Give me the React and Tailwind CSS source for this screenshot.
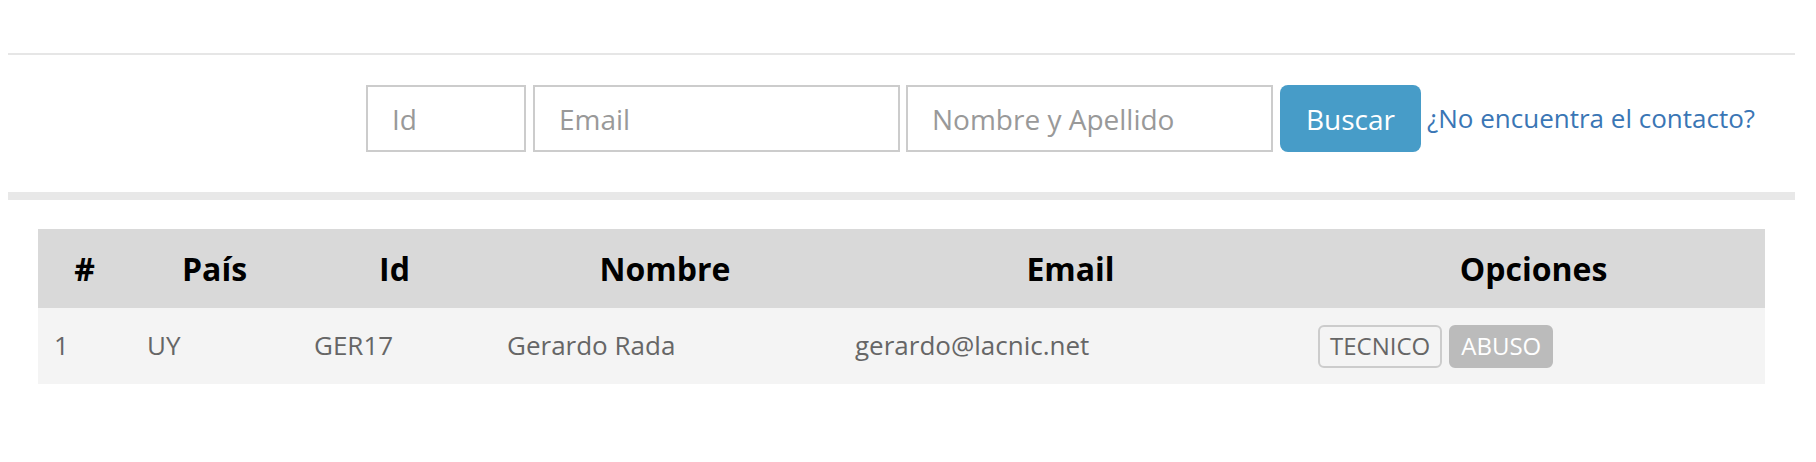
import React from "react";

export default function App() {
  const cols = [
    { h: "#", w: "w-[93px]" },
    { h: "País", w: "w-[167px]" },
    { h: "Id", w: "w-[193px]" },
    { h: "Nombre", w: "w-[348px]" },
    { h: "Email", w: "w-[463px]" },
    { h: "Opciones", w: "w-[463px]" },
  ];
  return (
    <div className="w-[1816px] h-[462px] bg-white font-['Open_Sans',sans-serif] overflow-hidden">
      <div className="pt-[53px] pl-[8px] pr-[21px]">
        <div className="h-[2px] bg-[#e6e6e6]" />
        <div className="mt-[30px] pl-[358px] flex items-center">
          <input
            placeholder="Id"
            className="w-[160px] h-[67px] border-2 border-[#cccccc] bg-white px-[24px] text-[28px] text-[#555] placeholder:text-[#999] outline-none"
          />
          <input
            placeholder="Email"
            className="ml-[7px] w-[367px] h-[67px] border-2 border-[#cccccc] bg-white px-[24px] text-[28px] text-[#555] placeholder:text-[#999] outline-none"
          />
          <input
            placeholder="Nombre y Apellido"
            className="ml-[6px] w-[367px] h-[67px] border-2 border-[#cccccc] bg-white px-[24px] text-[28px] text-[#555] placeholder:text-[#999] outline-none"
          />
          <button className="ml-[7px] w-[141px] h-[67px] rounded-[8px] bg-[#479cc8] text-white text-[28px]">
            Buscar
          </button>
          <a className="ml-[6px] text-[26px] text-[#3a76b5] cursor-pointer">
            ¿No encuentra el contacto?
          </a>
        </div>
        <div className="mt-[40px] h-[8px] bg-[#e8e8e8]" />
        <div className="mt-[29px] px-[30px]">
          <table className="w-[1727px] table-fixed border-collapse">
            <thead>
              <tr className="h-[79px] bg-[#d9d9d9]">
                {cols.map((c) => (
                  <th
                    key={c.h}
                    className={`${c.w} text-center font-bold text-[32px] text-black align-middle p-0`}
                  >
                    {c.h}
                  </th>
                ))}
              </tr>
            </thead>
            <tbody>
              <tr className="h-[76px] bg-[#f4f4f4] text-[26px] text-[#666]">
                <td className="pl-[16px] pb-[2px] align-middle">1</td>
                <td className="pl-[16px] pb-[2px] align-middle">UY</td>
                <td className="pl-[16px] pb-[2px] align-middle">GER17</td>
                <td className="pl-[16px] pb-[2px] align-middle">Gerardo Rada</td>
                <td className="pl-[16px] pb-[2px] align-middle">gerardo@lacnic.net</td>
                <td className="pl-[16px] align-middle">
                  <div className="flex items-center gap-[7px]">
                    <span className="h-[43px] px-[10px] flex items-center border-2 border-[#cccccc] rounded-[6px] bg-transparent text-[24px] text-[#666]">
                      TECNICO
                    </span>
                    <span className="h-[43px] px-[10px] flex items-center border-2 border-[#bbbbbb] rounded-[6px] bg-[#bbbbbb] text-[24px] text-white">
                      ABUSO
                    </span>
                  </div>
                </td>
              </tr>
            </tbody>
          </table>
        </div>
      </div>
    </div>
  );
}
